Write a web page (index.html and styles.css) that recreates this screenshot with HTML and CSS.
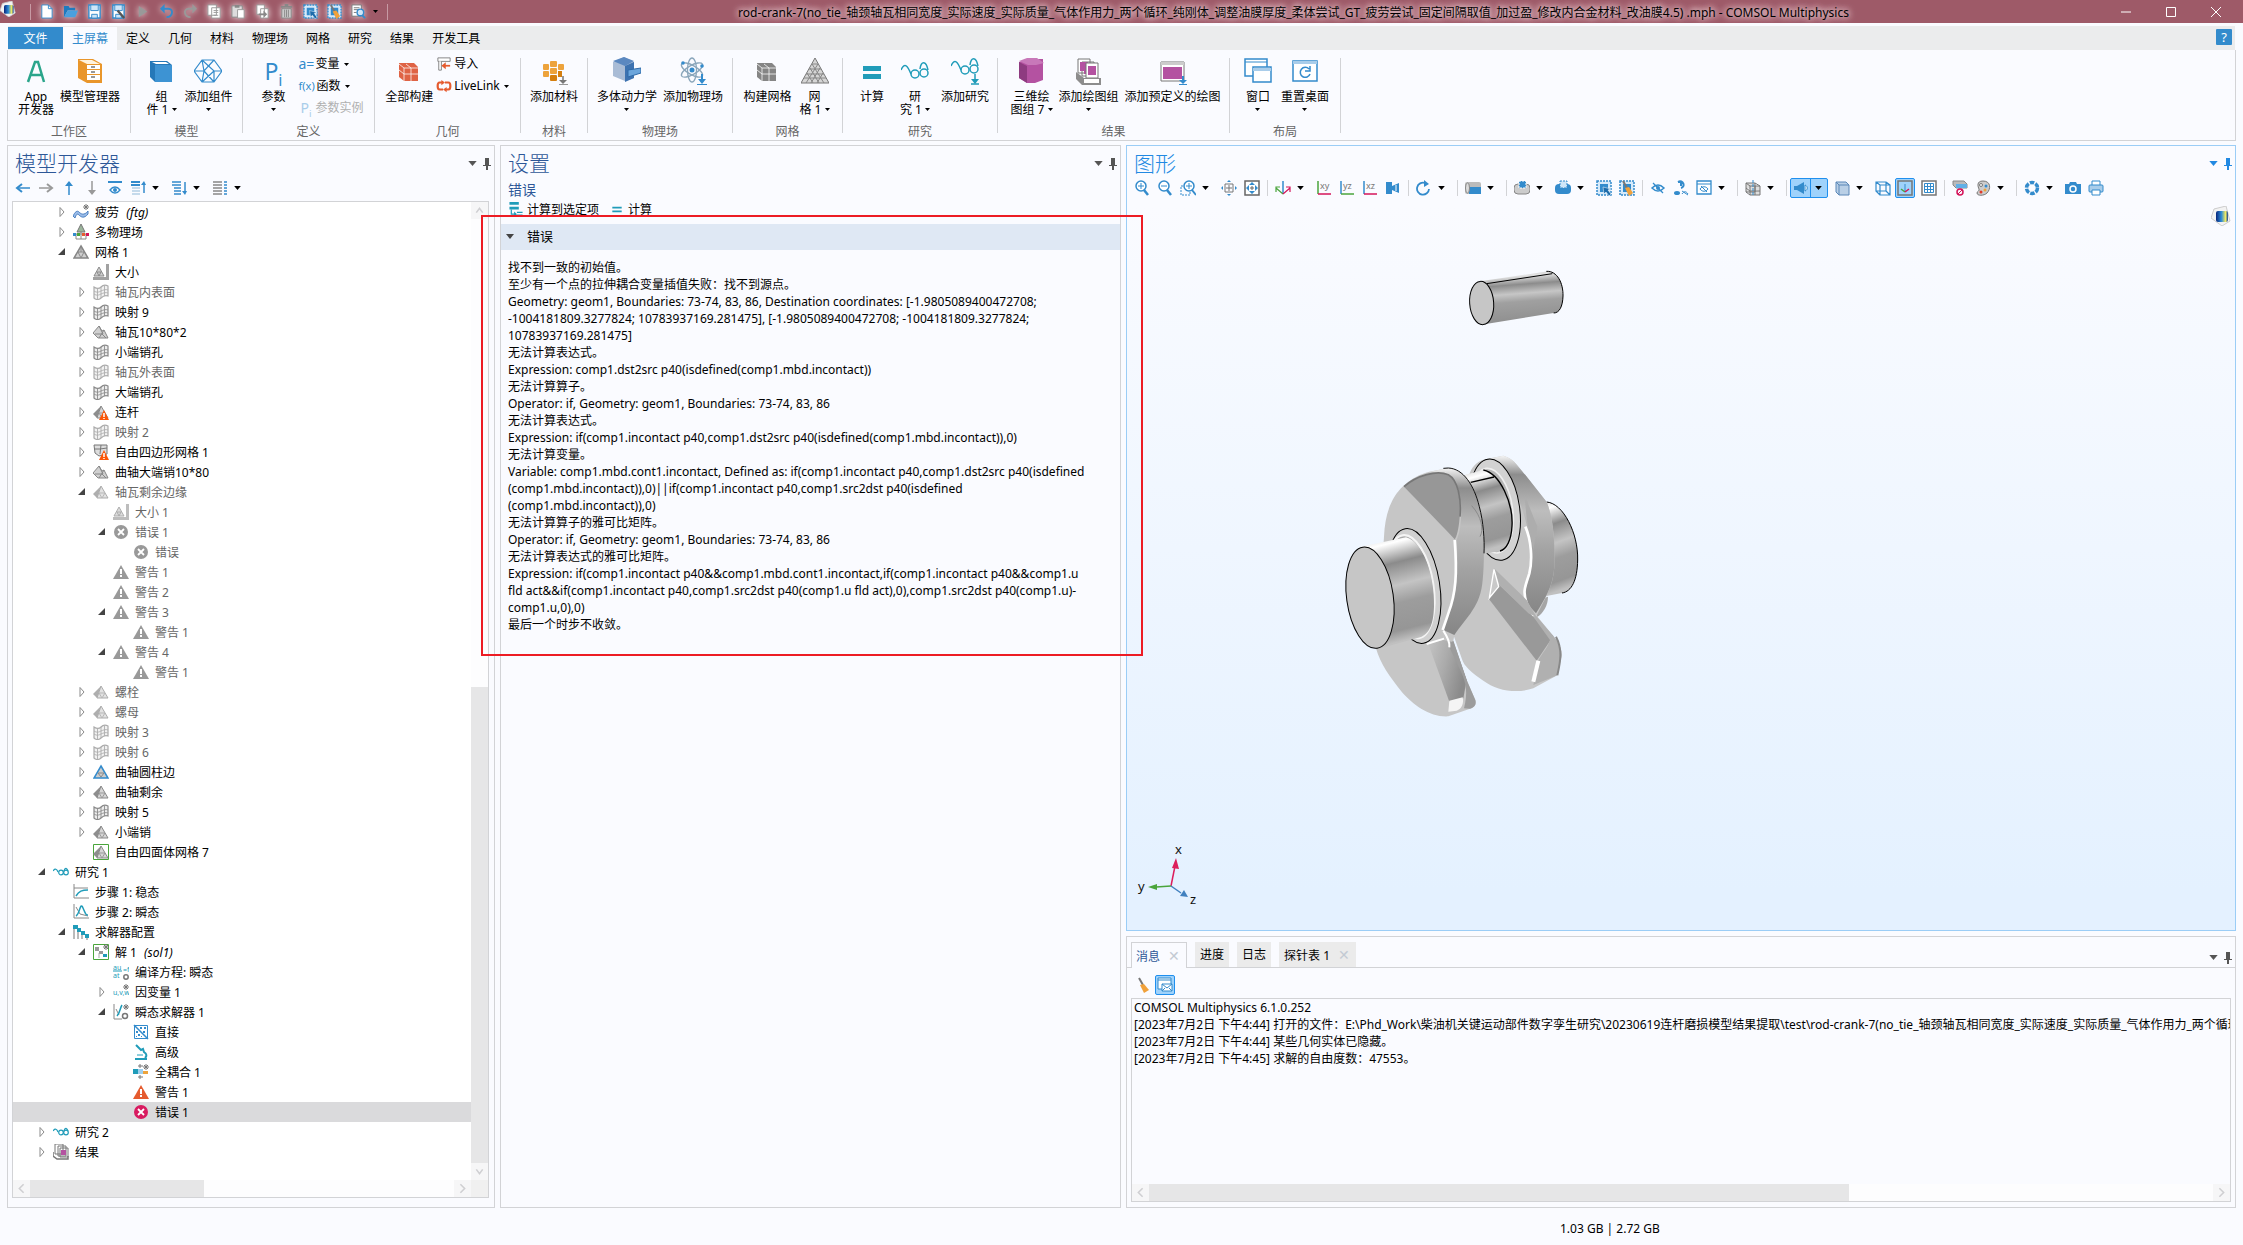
FILE: index.html
```html
<!DOCTYPE html>
<html lang="zh-CN">
<head>
<meta charset="utf-8">
<title>COMSOL Multiphysics</title>
<link rel="stylesheet" href="styles.css">
</head>
<body>
<svg class="paints" aria-hidden="true">
  <defs>
    <linearGradient id="logoG"><stop offset="0" stop-color="#06267c"/><stop offset=".45" stop-color="#2c8ad6"/><stop offset=".8" stop-color="#f3ec62"/><stop offset="1" stop-color="#0a3b9b"/></linearGradient>
    <linearGradient id="cyl" x1="0" y1="0" x2=".12" y2="1"><stop offset="0" stop-color="#b0b0b0"/><stop offset=".14" stop-color="#e4e4e4"/><stop offset=".3" stop-color="#8c8c8c"/><stop offset=".47" stop-color="#c6c6c6"/><stop offset=".62" stop-color="#a0a0a0"/><stop offset="1" stop-color="#8f8f8f"/></linearGradient>
    <linearGradient id="jour" x1="0" y1="0" x2=".17" y2="1"><stop offset="0" stop-color="#d0d0d0"/><stop offset=".12" stop-color="#fff"/><stop offset=".3" stop-color="#8b8b8b"/><stop offset=".5" stop-color="#c4c4c4"/><stop offset=".66" stop-color="#9d9d9d"/><stop offset=".9" stop-color="#969696"/><stop offset="1" stop-color="#c0c0c0"/></linearGradient>
    <linearGradient id="side" x1="0" y1="0" x2="0" y2="1"><stop offset="0" stop-color="#f4f4f4"/><stop offset=".12" stop-color="#8d8d8d"/><stop offset=".35" stop-color="#bdbdbd"/><stop offset=".6" stop-color="#a3a3a3"/><stop offset="1" stop-color="#868686"/></linearGradient>
    <linearGradient id="slope" x1="0" y1="0" x2="1" y2=".4"><stop offset="0" stop-color="#c4c4c4"/><stop offset=".5" stop-color="#ababab"/><stop offset="1" stop-color="#8b8b8b"/></linearGradient>
  </defs>
</svg>
<svg class="sprite" aria-hidden="true">
  <symbol id="logo" viewBox="0 0 20 20"><path d="M3 3 15 0 19 15 11 20 0 12Z" fill="#f3f3f3" stroke="#ccc"/><rect x="5" y="5" width="12" height="11" rx="2" fill="url(#logoG)"/></symbol>
  <symbol id="new" viewBox="0 0 16 16"><path d="M3 1h7l4 4v10H3z" fill="#fff" stroke="#338bcc"/><path d="M10 1v4h4" fill="none" stroke="#338bcc"/></symbol>
  <symbol id="open" viewBox="0 0 16 16"><path d="M1 14V2h5l1 2h6v3H5z" fill="#1f7abf"/><path d="M1 14 5 7h11l-3 7z" fill="#4aa0de"/></symbol>
  <symbol id="save" viewBox="0 0 16 16"><path d="M2 1h12v14H2z" fill="#fff" stroke="#338bcc" stroke-width="1.5"/><path d="M4 1h8v6H4zM5 11h6v4H5z" fill="#cfe6f8" stroke="#338bcc"/></symbol>
  <symbol id="saveas" viewBox="0 0 16 16"><use href="#save"/><path d="m7 7 7 8" stroke="#555" stroke-width="2.5"/></symbol>
  <symbol id="play" viewBox="0 0 16 16"><path d="M4 2 13 8 4 14z" fill="#999"/></symbol>
  <symbol id="undo" viewBox="0 0 16 16"><path d="M3 5h7c6 0 5 9-2 9" fill="none" stroke="#338bcc" stroke-width="2"/><path d="M6 0 1 5l5 5z" fill="#338bcc"/></symbol>
  <symbol id="redo" viewBox="0 0 16 16"><path d="M13 5H6c-6 0-5 9 2 9" fill="none" stroke="#999" stroke-width="2"/><path d="m10 0 5 5-5 5z" fill="#999"/></symbol>
  <symbol id="copy" viewBox="0 0 16 16"><path d="M1 1h9v11H1zM5 4h9v11H5z" fill="#fff" stroke="#999"/><path d="M7 7h5M7 9h5M7 12h5" stroke="#999"/></symbol>
  <symbol id="paste" viewBox="0 0 16 16"><path d="M1 2h11v12H1z" fill="#ddd" stroke="#888"/><path d="M4 1h5v3H4z" fill="#888"/><path d="M7 6h7v9H7z" fill="#fff" stroke="#999"/></symbol>
  <symbol id="dup" viewBox="0 0 16 16"><path d="M2 1h8v10H2zM6 5h8v10H6z" fill="#fff" stroke="#999"/><path d="M4 10h5V7l4 4-4 4v-3H4z" fill="#888"/></symbol>
  <symbol id="trash" viewBox="0 0 16 16"><path d="M2 3h12M6 1h4" stroke="#888" stroke-width="2"/><path d="M3 5h10v10H3z" fill="#ccc" stroke="#888"/><path d="M6 6v8M8 6v8M10 6v8" stroke="#888"/></symbol>
  <symbol id="sel" viewBox="0 0 16 16"><path d="M1 1h14v14H1z" fill="#d6eafa" stroke="#338bcc" stroke-width="1.5" stroke-dasharray="2 1"/><path d="M4 4h8v8H4z" fill="#338bcc"/><path d="m7 7 8 2-3 1 3 4-2 2-3-4-2 2z" fill="#1d6cab" stroke="#fff" stroke-width=".5"/></symbol>
  <symbol id="desel" viewBox="0 0 16 16"><path d="M1 1h14v14H1z" fill="#d6eafa" stroke="#338bcc" stroke-width="1.5" stroke-dasharray="2 1"/><path d="M4 4h8v8H4z" fill="#338bcc"/><path d="m4 1 4 7" stroke="#777" stroke-width="2"/><path d="m6 8 4-1 4 6-4 3z" fill="#f0a13b"/></symbol>
  <symbol id="find" viewBox="0 0 16 16"><path d="M1 1h10v12H1z" fill="#fff" stroke="#777"/><path d="M3 4h6M3 6h6M3 9h3" stroke="#777"/><circle cx="10" cy="9" r="3.5" fill="#cfe6f8" stroke="#338bcc" stroke-width="1.5"/><path d="m12 12 3 3" stroke="#338bcc" stroke-width="2"/></symbol>
  <symbol id="dd" viewBox="0 0 10 6"><path d="M0 0h10L5 6z" fill="currentColor"/></symbol>
  <symbol id="pin" viewBox="0 0 8 12"><path d="M2 0h4v7H2zM0 7h8v1H0zM3 8h2v4H3z" fill="currentColor"/></symbol>

  <symbol id="rApp" viewBox="0 0 28 28"><path d="M6 25 13 5h3l6 20M8 18h12" fill="none" stroke="#2aa58b" stroke-width="2.5"/></symbol>
  <symbol id="rMgr" viewBox="0 0 28 28"><path d="M2 2h15l9 5v19H11L2 21z" fill="#e9962b"/><path d="M3 3h13l8 4H11z" fill="#fff3dd"/><path d="M11 8h13v4H11zM11 13h13v4H11zM11 18h13v5H11z" fill="#fff"/><path d="M15 10h4M15 15h4M15 20h4" stroke="#777" stroke-width="1.5"/></symbol>
  <symbol id="rComp" viewBox="0 0 28 28"><path d="M3 4h17l5 4v17H8l-5-5z" fill="#2578b8"/><path d="M8 8h17v17H8z" fill="#3d93d3"/><path d="m5 5h14l3 2H9z" fill="#fff"/></symbol>
  <symbol id="rAddc" viewBox="0 0 28 28"><path d="M8 3h12l8 11-8 11H8L0 14zM0 14h10L20 3M8 3l2 11M10 14l10 11M10 14 8 25M8 3l12 11h8M20 14V25M20 14 8 25" fill="none" stroke="#338bcc" stroke-width="1.2"/></symbol>
  <symbol id="rBuild" viewBox="0 0 28 28"><path d="M4 6h15l4 4v14H9l-5-4z" fill="currentColor"/><path d="M4 7l5 4h14M9 11v13M4 13l5 4h14M16 11v13M11 7l5 4" fill="none" stroke="#fff" stroke-opacity=".75"/></symbol>
  <symbol id="rImp" viewBox="0 0 16 16"><path d="M1 1h14v4H1z" fill="#fff" stroke="#777"/><path d="M2 5v10h3V5" fill="#fff" stroke="#777"/><path d="M15 10H8" stroke="#e55b2f" stroke-width="2"/><path d="m10 6-5 4 5 4z" fill="#e55b2f"/></symbol>
  <symbol id="rLink" viewBox="0 0 16 16"><path d="M6 4H3c-3 0-3 8 0 8h4M10 12h3c3 0 3-8 0-8H9" fill="none" stroke="#e55b2f" stroke-width="2.5"/><path d="M5 1l4 3-4 3zM11 9l-4 3 4 3z" fill="#e55b2f"/></symbol>
  <symbol id="rMat" viewBox="0 0 28 28"><g fill="#eda33c"><rect x="10" y="4" width="7" height="6" rx="1"/><rect x="3" y="7" width="6" height="6" rx="1"/><rect x="18" y="7" width="6" height="6" rx="1"/><rect x="10" y="11" width="7" height="6" rx="1"/><rect x="3" y="14" width="6" height="6" rx="1"/></g><rect x="10" y="18" width="7" height="6" rx="1" fill="#d57f0f"/><rect x="18" y="14" width="4" height="6" fill="#d57f0f"/><path d="M23 19v6M19 28h9" stroke="#777" stroke-width="1.5"/><path d="M19 23h8l-4 4z" fill="#777"/></symbol>
  <symbol id="rMbd" viewBox="0 0 28 28"><path d="M0 5 11 0l10 5v16l-9 3-12-5z" fill="#a9bcd6"/><path d="M0 4 11 0l10 4-9 5z" fill="#5b88c0"/><path d="M12 9l9-4v16l-9 4z" fill="#3d72b0"/><path d="M15 13l13-2v5l-13 4z" fill="#6ba5dc" stroke="#2f6aa8"/></symbol>
  <symbol id="atom" viewBox="0 0 28 28"><g fill="none" stroke="#8aa6bb" stroke-width="1.3"><ellipse cx="13" cy="13" rx="4.5" ry="12"/><ellipse cx="13" cy="13" rx="4.5" ry="12" transform="rotate(60 13 13)"/><ellipse cx="13" cy="13" rx="4.5" ry="12" transform="rotate(-60 13 13)"/></g><circle cx="13" cy="13" r="2.5" fill="#338bcc"/><circle cx="4" cy="6" r="1.8" fill="#338bcc"/><circle cx="23" cy="9" r="1.8" fill="#338bcc"/></symbol>
  <symbol id="rPhys" viewBox="0 0 28 28"><use href="#atom"/><path d="M23 17v7M18 28h10" stroke="#338bcc" stroke-width="2"/><path d="M19 22h8l-4 5z" fill="#338bcc"/></symbol>
  <symbol id="rTri" viewBox="0 0 28 28"><path d="M14 1 28 26H0z" fill="#d5d5d5" stroke="#777"/><path d="M11 7h6M8 12h12M5 17h18M3 21h22M6 16l6 10M9 11l9 15M11 7l12 19M22 16l-6 10M19 11l-9 15M17 7 5 26" stroke="#888" fill="none"/></symbol>
  <symbol id="rEq" viewBox="0 0 28 28"><path d="M5 9h18v5H5zM5 17h18v5H5z" fill="#209cb9"/></symbol>
  <symbol id="rGl" viewBox="0 0 28 28"><g fill="none" stroke="#209cb9" stroke-width="1.5"><path d="M0 13C4 4 7 10 10 17M19 12c1-8 6-9 8 1"/><circle cx="14" cy="17" r="4"/><circle cx="23" cy="16" r="4"/></g></symbol>
  <symbol id="rAddS" viewBox="0 0 28 28"><g fill="none" stroke="#209cb9" stroke-width="1.5"><path d="M0 9C4 0 7 6 10 13M19 8c1-8 6-9 8 1"/><circle cx="14" cy="13" r="4"/><circle cx="23" cy="12" r="4"/><path d="M24 17v7M20 27h8"/></g><path d="M20 22h8l-4 5z" fill="#209cb9"/></symbol>
  <symbol id="rPlot" viewBox="0 0 28 28"><path d="M2 5 10 2h16v21l-8 3h-8L2 21z" fill="#b452a1"/><path d="M2 4 10 1h10l7 5-8 2h-8z" fill="#c878b9"/><path d="M10 9 2 5v16l8 5z" fill="#8e3b80"/></symbol>
  <symbol id="rGrp" viewBox="0 0 28 28"><path d="M3 2h12v14H3zM7 5h12v14H7z" fill="#fff" stroke="#777"/><path d="M5 5h8v9H5zM9 8h8v9H9z" fill="#b452a1"/><path d="M11 6h12v15H11z" fill="#fff" stroke="#777"/><path d="M13 9h8v9h-8z" fill="#b452a1"/><path d="M1 15v7l6 6h19v-7H9z" fill="#8d8d8d"/><path d="M9 22h15v4H9z" fill="#fff"/></symbol>
  <symbol id="rPre" viewBox="0 0 28 28"><path d="M2 5h23v19H2z" fill="#fff" stroke="#777"/><path d="M2 5h23v3H2z" fill="#ccc"/><path d="M4 10h19v12H4z" fill="#b452a1"/><path d="M24 19v7M20 28h8" stroke="#338bcc" stroke-width="2"/><path d="M20 23h8l-4 4z" fill="#338bcc"/></symbol>
  <symbol id="rWin" viewBox="0 0 28 28"><path d="M1 2h22v17H1z" fill="#fff" stroke="#338bcc" stroke-width="1.5"/><path d="M1 5h22" stroke="#338bcc"/><path d="M9 10h18v15H9z" fill="#fff" stroke="#338bcc" stroke-width="1.5"/><path d="M9 11h18v3H9z" fill="#a9cdea"/></symbol>
  <symbol id="rRes" viewBox="0 0 28 28"><path d="M2 4h24v20H2z" fill="#fff" stroke="#338bcc" stroke-width="1.5"/><path d="M2 4h24v3H2z" fill="#a9cdea"/><path d="M18 12a5 5 0 1 0 1 5M19 9v5h-5" fill="none" stroke="#338bcc" stroke-width="1.5"/></symbol>

  <symbol id="aL" viewBox="0 0 16 16"><path d="M3 8h12" stroke="currentColor" stroke-width="1.5"/><path d="M7 4 2 8l5 4" fill="none" stroke="currentColor" stroke-width="2"/></symbol>
  <symbol id="aR" viewBox="0 0 16 16"><path d="M1 8h12" stroke="currentColor" stroke-width="1.5"/><path d="m9 4 5 4-5 4" fill="none" stroke="currentColor" stroke-width="2"/></symbol>
  <symbol id="aU" viewBox="0 0 16 16"><path d="M8 2v13" stroke="currentColor" stroke-width="1.5"/><path d="M4 6 8 1l4 5z" fill="currentColor"/></symbol>
  <symbol id="aD" viewBox="0 0 16 16"><path d="M8 1v13" stroke="currentColor" stroke-width="1.5"/><path d="m4 10 4 5 4-5z" fill="currentColor"/></symbol>
  <symbol id="show" viewBox="0 0 16 16"><path d="M1 2h14M3 2h10" stroke="#338bcc" stroke-width="2"/><path d="M3 10c3-4 7-4 10 0-3 4-7 4-10 0z" fill="#fff" stroke="#338bcc" stroke-width="1.3"/><circle cx="8" cy="10" r="2" fill="#338bcc"/></symbol>
  <symbol id="colp" viewBox="0 0 16 16"><path d="M1 2h9M1 5h9" stroke="#338bcc" stroke-width="2"/><path d="M2 8h8M2 11h8M2 14h8" stroke="#8fb9d8"/><path d="M14 3v10" stroke="#338bcc" stroke-width="1.5"/><path d="m11 5 3-4 2 4z" fill="#338bcc"/></symbol>
  <symbol id="expd" viewBox="0 0 16 16"><path d="M1 2h9M1 5h9M3 8h7M3 11h7M3 14h7" stroke="#338bcc" stroke-width="1.5"/><path d="M14 2v10" stroke="#338bcc" stroke-width="1.5"/><path d="m11 11 3 4 2-4z" fill="#338bcc"/></symbol>
  <symbol id="cols" viewBox="0 0 16 16"><path d="M1 2h9M1 5h9M1 8h9M1 11h9M1 14h9" stroke="#888" stroke-width="1.5"/><path d="M12 2h3M12 5h3M12 8h3M12 11h3M12 14h3" stroke="#338bcc" stroke-width="1.5"/></symbol>

  <symbol id="tc" viewBox="0 0 10 12"><path d="M3 1.5 7 6 3 10.500z" fill="#fff" stroke="#8b8b8b"/></symbol>
  <symbol id="to" viewBox="0 0 10 12"><path d="M8 2v7H1z" fill="#444"/></symbol>
  <symbol id="gear" viewBox="0 0 16 16"><path d="M13 0v6M10 3h6M11 1l4 4M15 1l-4 4" stroke="#777"/></symbol>
  <symbol id="ftg" viewBox="0 0 16 16"><path d="M0 12c2-4 4-6 6-4s5 4 9-1v3c-4 5-7 3-9 1s-3 0-4 3z" fill="#9bbce8" stroke="#4b80c2"/><use href="#gear"/></symbol>
  <symbol id="mph" viewBox="0 0 16 16"><path d="M8 0 4 8h8z" fill="#9bb59b" stroke="#777"/><path d="M3 10h10v5H3zM8 8v7" fill="none" stroke="#888"/><path d="M0 9h3v3H0z" fill="#338bcc"/><path d="M4 9h3v3H4z" fill="#4aa53c"/><path d="M9 9h3v3H9z" fill="#e55b2f"/><path d="M13 9h3v3h-3z" fill="#d4145a"/></symbol>
  <symbol id="mesh" viewBox="0 0 16 16"><path d="M8 2 15 14H1z" fill="#cfcfcf" stroke="#858585" stroke-width="1.5"/><path d="M5 8h6l-3 6zM8 3v5" fill="none" stroke="#8a8a8a"/></symbol>
  <symbol id="size" viewBox="0 0 16 16"><path d="M6 3 11 12H1z" fill="#cfcfcf" stroke="#8a8a8a"/><path d="M4 8h4l-2 4z" fill="none" stroke="#8a8a8a"/><path d="M13 0h3v16h-3zM0 13h16v3H0z" fill="#a2a2a2"/></symbol>
  <symbol id="map" viewBox="0 0 16 16"><path d="M1 3c3 2 5 2 7 0s5-2 7-1v10c-3-1-5 0-7 2s-5 2-7 0z" fill="#ececec" stroke="#888" stroke-width="1.2"/><path d="M1 7c3 2 5 1 7 0s5-2 7-1M1 10c3 2 5 1 7 0s5-2 7-1M4.500 4v11M8 3v11M11.500 2v10" fill="none" stroke="#8c8c8c" stroke-width=".9"/></symbol>
  <symbol id="edge" viewBox="0 0 16 16"><path d="M6 2 0 9l5 5h10L11 6 9 7z" fill="#d0d0d0" stroke="#888"/><path d="M6 2l4 8H2M11 6 6 14M9 10l4 4" fill="none" stroke="#888"/></symbol>
  <symbol id="tet" viewBox="0 0 16 16"><path d="M8 2 0 10l4 4z" fill="#8d8d8d"/><path d="M8 2l7 12H4z" fill="#d6d6d6" stroke="#888"/><path d="M6 9h6l-3 5z" fill="none" stroke="#999"/></symbol>
  <symbol id="warnS" viewBox="0 0 16 16"><path d="M11 6l5 10H6z" fill="#fb5607"/><path d="M11 9v4M11 14v1" stroke="#fff" stroke-width="1.5"/></symbol>
  <symbol id="tetW" viewBox="0 0 16 16"><use href="#tet"/><use href="#warnS"/></symbol>
  <symbol id="quadW" viewBox="0 0 16 16"><path d="M1 1h13v9l-8 2-4-3z" fill="#ddd" stroke="#777"/><path d="M1 5h6l7-1M8 1l-1 9" fill="none" stroke="#777"/><use href="#warnS"/></symbol>
  <symbol id="triB" viewBox="0 0 16 16"><path d="M8 2 15 14H1z" fill="#ccc" stroke="#338bcc" stroke-width="1.5"/><path d="M5 9h6l-3 4z" fill="none" stroke="#888"/></symbol>
  <symbol id="tetG" viewBox="0 0 16 16"><path d="M.5.5h15v15H.5z" fill="#fff" stroke="#4aa53c"/><use href="#tet"/></symbol>
  <symbol id="err" viewBox="0 0 16 16"><circle cx="8" cy="8" r="7" fill="currentColor"/><path d="m5 5 6 6M11 5l-6 6" stroke="#fff" stroke-width="1.8"/></symbol>
  <symbol id="warn" viewBox="0 0 16 16"><path d="M8 1l8 14H0z" fill="currentColor"/><path d="M8 5v5M8 11v2" stroke="#fff" stroke-width="2"/></symbol>
  <symbol id="gl" viewBox="0 0 16 16"><g fill="none" stroke="#209cb9" stroke-width="1.2"><path d="M0 7c2-3 4-2 5 1M11 7c1-4 3-3 4 0"/><circle cx="8" cy="8.5" r="2.300"/><circle cx="13" cy="8.5" r="2.300"/></g></symbol>
  <symbol id="st1" viewBox="0 0 16 16"><path d="M1 0v14h15M1 4h14" fill="none" stroke="#888"/><path d="M3 12c3-5 6-6 12-6" fill="none" stroke="#209cb9" stroke-width="1.5"/></symbol>
  <symbol id="st2" viewBox="0 0 16 16"><path d="M1 0v14h15M3 3l4 7 8 2" fill="none" stroke="#888"/><path d="M3 12C7 10 7-3 10 4s3 7 5 7" fill="none" stroke="#209cb9" stroke-width="1.5"/></symbol>
  <symbol id="solc" viewBox="0 0 16 16"><path d="M1 3v12M5 5v10M9 9v6M14 12v4" stroke="#777"/><path d="M0 1h5v4H0zM4 4h4v4H4zM8 7h4v4H8zM12 10h4v4h-4z" fill="#209cb9"/></symbol>
  <symbol id="sol" viewBox="0 0 16 16"><path d="M.5.5h15v15H.5z" fill="#fff" stroke="#4aa53c"/><path d="M2 3h4v4H2zM6 7h4v3H6z" fill="#999"/><path d="M10 10h4v3h-4z" fill="#209cb9"/><path d="M6 9v5" stroke="#aaa"/><use href="#gear"/></symbol>
  <symbol id="ceq" viewBox="0 0 16 16"><text x="0" y="6" class="tiny">au</text><text x="0" y="14" class="tiny">at</text><text x="10" y="8" class="tiny">=f</text><path d="M0 7h9" stroke="#209cb9"/><circle cx="13" cy="13" r="2.2" fill="none" stroke="#777" stroke-width="1.5"/></symbol>
  <symbol id="uvw" viewBox="0 0 16 16"><text x="0" y="11" class="tiny">u,v,w</text><use href="#gear"/></symbol>
  <symbol id="tsol" viewBox="0 0 16 16"><path d="M1 0v15h8M3 5l3 6" fill="none" stroke="#888"/><path d="M4 12c3-3 3-8 5-11" fill="none" stroke="#209cb9" stroke-width="1.5"/><use href="#gear"/><circle cx="12" cy="12" r="2.5" fill="none" stroke="#777" stroke-width="1.5"/></symbol>
  <symbol id="dir" viewBox="0 0 16 16"><path d="M1.5 1.5h13v13h-13z" fill="#fff" stroke="#338bcc"/><path d="m1 1 14 14" stroke="#338bcc" stroke-width="1.5"/><path d="M7 3h2v2H7zM11 3h2v2h-2zM10 7h2v2h-2zM3 7h2v2H3zM5 10h2v2H5zM3 12h1v1H3zM8 12h1v1H8z" fill="#338bcc"/></symbol>
  <symbol id="adv" viewBox="0 0 16 16"><path d="M3 1l5 5 2-1 1 3c3 2 3 4 1 6" fill="none" stroke="#209cb9" stroke-width="2"/><path d="M2 15h12" stroke="#209cb9" stroke-width="2"/><path d="M4 11h6" stroke="#209cb9"/></symbol>
  <symbol id="fc" viewBox="0 0 16 16"><path d="M0 5h5v5H0z" fill="#209cb9"/><path d="M5 5h5v5H5z" fill="#9fd0ef"/><path d="M10 7h5v3h-5z" fill="#eda33c"/><path d="M7 0v4M5 2h5M7 11v4M5 13h5" stroke="#777"/><use href="#gear"/></symbol>
  <symbol id="res" viewBox="0 0 16 16"><path d="M2 0h8v10H2zM5 2h8v10H5zM7 4h8v9H7z" fill="#fff" stroke="#777"/><path d="M8 6h5v5H8z" fill="#b452a1"/><path d="M0 8v4l4 3h11v-3" fill="none" stroke="#777" stroke-width="1.5"/></symbol>

  <symbol id="zin" viewBox="0 0 16 16"><circle cx="7" cy="6" r="5" fill="#fff" stroke="#338bcc" stroke-width="1.5"/><path d="M4 6h6M7 3v6" stroke="#338bcc"/><path d="m10 10 4 5" stroke="#338bcc" stroke-width="2.5"/></symbol>
  <symbol id="zout" viewBox="0 0 16 16"><circle cx="7" cy="6" r="5" fill="#fff" stroke="#338bcc" stroke-width="1.5"/><path d="M4 6h6" stroke="#338bcc"/><path d="m10 10 4 5" stroke="#338bcc" stroke-width="2.5"/></symbol>
  <symbol id="zbox" viewBox="0 0 16 16"><path d="M1 6h9v9H1z" fill="none" stroke="#338bcc" stroke-dasharray="2 1"/><circle cx="9" cy="6" r="5" fill="#fff" stroke="#338bcc" stroke-width="1.5"/><path d="M6 6h6M9 3v6" stroke="#338bcc"/><path d="m12 10 4 5" stroke="#338bcc" stroke-width="2"/></symbol>
  <symbol id="cen" viewBox="0 0 16 16"><path d="M4 4h8v8H4zM8 5v6M5 8h6" fill="none" stroke="#777"/><path d="m8 0 2 2H6zM8 16l2-2H6zM0 8l2-2v4zM16 8l-2-2v4z" fill="#338bcc"/></symbol>
  <symbol id="ext" viewBox="0 0 16 16"><path d="M1 1h14v14H1z" fill="#fff" stroke="#666" stroke-width="1.5"/><path d="m8 2 3 3H5zM8 14l3-3H5zM2 8l3-3v6zM14 8l-3-3v6z" fill="#338bcc"/><path d="M8 6v4M6 8h4" stroke="#666"/></symbol>
  <symbol id="axs" viewBox="0 0 16 16"><path d="M8 1v13" stroke="#338bcc" stroke-width="1.5"/><path d="m8 14-7-6M1 12V7h4" fill="none" stroke="#4aa53c" stroke-width="1.2"/><path d="m8 14 7-6M15 12V7h-4" fill="none" stroke="#d4145a" stroke-width="1.2"/></symbol>
  <symbol id="vxy" viewBox="0 0 16 16"><path d="M2 1v13" stroke="#4aa53c" stroke-width="1.5"/><path d="M2 14h13" stroke="#d4145a" stroke-width="1.5"/><text x="4" y="9" class="ax">xy</text></symbol>
  <symbol id="vyz" viewBox="0 0 16 16"><path d="M2 1v13" stroke="#338bcc" stroke-width="1.5"/><path d="M2 14h13" stroke="#4aa53c" stroke-width="1.5"/><text x="4" y="9" class="ax">yz</text></symbol>
  <symbol id="vxz" viewBox="0 0 16 16"><path d="M2 1v13" stroke="#338bcc" stroke-width="1.5"/><path d="M2 14h13" stroke="#d4145a" stroke-width="1.5"/><text x="4" y="9" class="ax">xz</text></symbol>
  <symbol id="persp" viewBox="0 0 16 16"><path d="M1 2h6v12H1zM7 6l7-3v10l-7-3z" fill="#338bcc"/><path d="M11 5v6" stroke="#fff"/></symbol>
  <symbol id="rot" viewBox="0 0 16 16"><path d="M9 3a6 6 0 1 0 4 6" fill="none" stroke="#338bcc" stroke-width="1.8"/><path d="M8 0v7l5-3z" fill="#338bcc"/></symbol>
  <symbol id="clip" viewBox="0 0 16 16"><rect y="2" width="16" height="12" rx="2" fill="#bbb"/><path d="M4 7h12v7H4z" fill="#338bcc"/><ellipse cx="2.5" cy="8" rx="2" ry="5" fill="#ddd" stroke="#888"/></symbol>
  <symbol id="selb" viewBox="0 0 16 16"><rect y="4" width="16" height="10" rx="4" fill="#ccc" stroke="#888"/><path d="M5 1h7v7H5z" fill="#338bcc" stroke="#fff" stroke-dasharray="2 1"/></symbol>
  <symbol id="selc" viewBox="0 0 16 16"><rect y="4" width="16" height="10" rx="4" fill="#338bcc"/><path d="M5 1h7v7H5z" fill="#cfe6f8" stroke="#338bcc" stroke-dasharray="2 1"/></symbol>
  <symbol id="hide" viewBox="0 0 16 16"><path d="M2 8c4-4 8-4 12 0-4 4-8 4-12 0z" fill="none" stroke="#338bcc" stroke-width="1.5"/><circle cx="8" cy="8" r="2" fill="#338bcc"/><path d="m3 3 10 10" stroke="#338bcc" stroke-width="1.3"/></symbol>
  <symbol id="unh" viewBox="0 0 16 16"><path d="M5 2c5-3 8 5 3 6M5 2h3v4" fill="none" stroke="#338bcc" stroke-width="2"/><ellipse cx="4" cy="13" rx="3" ry="2" fill="#338bcc"/><path d="M9 11l6 4M9 14c2-3 4-3 6 0" stroke="#338bcc" fill="none"/></symbol>
  <symbol id="hwin" viewBox="0 0 16 16"><path d="M1 1h14v13H1z" fill="#fff" stroke="#338bcc" stroke-width="1.3"/><path d="M1 4h14" stroke="#338bcc"/><path d="M4 9c2-3 6-3 8 0-2 3-6 3-8 0zM5 6l6 6" fill="none" stroke="#338bcc"/></symbol>
  <symbol id="grid3" viewBox="0 0 16 16"><path d="M1 3h9v9H1zM5 6h10v9H5zM1 3l4 3M10 3l5 3M1 12l4 3M1 8l4 3h10M10 6v9" fill="#ddd" stroke="#777"/><path d="M8 0v16" stroke="#338bcc" stroke-dasharray="3 1"/></symbol>
  <symbol id="lite" viewBox="0 0 16 16"><path d="M1 6h3l7-4v12L4 10H1z" fill="#338bcc"/><path d="M12 5c3 1 3 5 0 6z" fill="#fff" stroke="#338bcc"/></symbol>
  <symbol id="transp" viewBox="0 0 16 16"><path d="M2 2h10l3 3v10H5l-3-3z" fill="#b9cfe6" stroke="#5a87b8"/><path d="M2 2l3 3h10M5 5v10" fill="none" stroke="#5a87b8"/></symbol>
  <symbol id="wire" viewBox="0 0 16 16"><path d="M1 2h10v9H1zM5 5h10v10H5zM1 2l4 3M11 2l4 3M1 11l4 4M11 11l4 4" fill="none" stroke="#338bcc" stroke-width="1.2"/></symbol>
  <symbol id="orient" viewBox="0 0 16 16"><path d="M1 1h14v14H1z" fill="none" stroke="#777" stroke-width="1.5"/><path d="M8 4v8" stroke="#338bcc"/><path d="m8 12-4-3" stroke="#4aa53c" stroke-width="1.5"/><path d="m8 12 4-3" stroke="#d4145a" stroke-width="1.5"/></symbol>
  <symbol id="grid" viewBox="0 0 16 16"><path d="M1 1h14v14H1z" fill="#fff" stroke="#777" stroke-width="1.5"/><path d="M3.5 3.5h9v9h-9zM6.5 3.5v9M9.5 3.5v9M3.5 6.5h9M3.5 9.5h9" fill="none" stroke="#338bcc"/></symbol>
  <symbol id="nolab" viewBox="0 0 16 16"><path d="M1 1h11l3 3v4H4L1 5z" fill="#bbb" stroke="#888"/><path d="M4 4h11v4H4z" fill="#62b0e6"/><circle cx="8" cy="12" r="3" fill="none" stroke="#d4145a" stroke-width="1.5"/><path d="m6 14 4-4" stroke="#d4145a"/></symbol>
  <symbol id="pal" viewBox="0 0 16 16"><path d="M8 1c8 0 8 8 4 12-3 3-10 3-10 0 0-2 3-2 2-4S1 1 8 1z" fill="#ccc" stroke="#777"/><circle cx="6" cy="5" r="1.5" fill="#fff" stroke="#777"/><circle cx="11" cy="6" r="1.5" fill="#338bcc"/><circle cx="10" cy="10" r="1.5" fill="#eda33c"/><circle cx="6" cy="12" r="1.5" fill="#e03a2a"/></symbol>
  <symbol id="snapi" viewBox="0 0 16 16"><circle cx="8" cy="8" r="5.5" fill="none" stroke="#338bcc" stroke-width="3.5" stroke-dasharray="4.5 1.26"/></symbol>
  <symbol id="cam" viewBox="0 0 16 16"><path d="M0 4h4l1-2h6l1 2h4v10H0z" fill="#338bcc"/><circle cx="8" cy="9" r="3" fill="none" stroke="#fff" stroke-width="1.5"/></symbol>
  <symbol id="print" viewBox="0 0 16 16"><path d="M4 1h8v5H4z" fill="#fff" stroke="#338bcc"/><rect x="1" y="5" width="14" height="7" rx="1" fill="#a9cdea" stroke="#338bcc"/><path d="M4 10h8v5H4z" fill="#fff" stroke="#338bcc"/></symbol>
  <symbol id="broom" viewBox="0 0 16 16"><path d="m4 1 4 7" stroke="#777" stroke-width="2"/><path d="m5 8 4-1 5 6-5 3z" fill="#f0a13b"/></symbol>
  <symbol id="msgw" viewBox="0 0 16 16"><path d="M1 1h13v11H1z" fill="#fff" stroke="#338bcc"/><path d="M1 3h13" stroke="#338bcc"/><path d="M5 7h10v7H5z" fill="#fff" stroke="#338bcc"/><path d="m5 7 5 4 5-4M5 14l3-3M15 14l-3-3" fill="none" stroke="#338bcc"/></symbol>
  <symbol id="ctos" viewBox="0 0 16 16"><path d="M1 0h10v3H1zM1 5h10v3H1z" fill="#209cb9"/><path d="M3 8v5h4M9 11h6M9 14h6" fill="none" stroke="#209cb9" stroke-width="1.3"/><path d="M6 10v6l3-3z" fill="#209cb9"/></symbol>
  <symbol id="eq" viewBox="0 0 16 16"><path d="M3 5h10v2H3zM3 9h10v2H3z" fill="#209cb9"/></symbol>
  <symbol id="chL" viewBox="0 0 16 16"><path d="m10 4-4 4 4 4" fill="none" stroke="#cfcfd2" stroke-width="1.5"/></symbol>
  <symbol id="chR" viewBox="0 0 16 16"><path d="m6 4 4 4-4 4" fill="none" stroke="#cfcfd2" stroke-width="1.5"/></symbol>
  <symbol id="chU" viewBox="0 0 16 16"><path d="m5 10 3-4 3 4" fill="none" stroke="#cfcfd2" stroke-width="1.5"/></symbol>
  <symbol id="chD" viewBox="0 0 16 16"><path d="m5 6 3 4 3-4" fill="none" stroke="#cfcfd2" stroke-width="1.5"/></symbol>
</svg>

<header class="titlebar">
  <svg class="logo"><use href="#logo"/></svg>
  <div class="qat">
    <button aria-label="新建"><svg><use href="#new"/></svg></button>
    <button aria-label="打开"><svg><use href="#open"/></svg></button>
    <button aria-label="保存"><svg><use href="#save"/></svg></button>
    <button aria-label="另存为"><svg><use href="#saveas"/></svg></button>
    <button aria-label="运行"><svg><use href="#play"/></svg></button>
    <button aria-label="撤消"><svg><use href="#undo"/></svg></button>
    <button aria-label="重做"><svg><use href="#redo"/></svg></button>
    <button aria-label="复制"><svg><use href="#copy"/></svg></button>
    <button aria-label="粘贴"><svg><use href="#paste"/></svg></button>
    <button aria-label="创建副本"><svg><use href="#dup"/></svg></button>
    <button aria-label="删除"><svg><use href="#trash"/></svg></button>
    <button aria-label="选择"><svg><use href="#sel"/></svg></button>
    <button aria-label="清除选择"><svg><use href="#desel"/></svg></button>
    <button aria-label="查找"><svg><use href="#find"/></svg></button>
    <button class="more" aria-label="更多"><svg class="dd"><use href="#dd"/></svg></button>
  </div>
  <h1>rod-crank-7(no_tie_轴颈轴瓦相同宽度_实际速度_实际质量_气体作用力_两个循环_纯刚体_调整油膜厚度_柔体尝试_GT_疲劳尝试_固定间隔取值_加过盈_修改内合金材料_改油膜4.5) .mph - COMSOL Multiphysics</h1>
  <div class="winbtns">
    <button aria-label="最小化"><svg viewBox="0 0 10 10"><path d="M0 5h10"/></svg></button>
    <button aria-label="最大化"><svg viewBox="0 0 10 10"><path d="M.5.5h9v9h-9z"/></svg></button>
    <button aria-label="关闭"><svg viewBox="0 0 10 10"><path d="m0 0 10 10M10 0 0 10"/></svg></button>
  </div>
</header>

<nav class="tabs">
  <button class="file">文件</button>
  <button class="on">主屏幕</button>
  <button>定义</button><button>几何</button><button>材料</button><button>物理场</button><button>网格</button><button>研究</button><button>结果</button><button>开发工具</button>
  <button class="help" aria-label="帮助">?</button>
</nav>

<section class="ribbon">
  <div class="grp g1"><div class="items">
    <button class="rb"><svg><use href="#rApp"/></svg><span>App<br>开发器</span></button>
    <button class="rb"><svg><use href="#rMgr"/></svg><span>模型管理器</span></button>
  </div><h2>工作区</h2></div>
  <div class="grp g2"><div class="items">
    <button class="rb"><svg><use href="#rComp"/></svg><span>组<br>件 1 <svg class="dd"><use href="#dd"/></svg></span></button>
    <button class="rb"><svg><use href="#rAddc"/></svg><span>添加组件<br><svg class="dd"><use href="#dd"/></svg></span></button>
  </div><h2>模型</h2></div>
  <div class="grp g3"><div class="items">
    <button class="rb"><b class="pi">P<sub>i</sub></b><span>参数<br><svg class="dd"><use href="#dd"/></svg></span></button>
    <div class="col">
      <button class="sb"><b>a=</b>变量 <svg class="dd"><use href="#dd"/></svg></button>
      <button class="sb"><b class="fx">f(x)</b>函数 <svg class="dd"><use href="#dd"/></svg></button>
      <button class="sb" disabled><b>P<sub>i</sub></b>参数实例</button>
    </div>
  </div><h2>定义</h2></div>
  <div class="grp g4"><div class="items">
    <button class="rb geo"><svg><use href="#rBuild"/></svg><span>全部构建</span></button>
    <div class="col">
      <button class="sb"><svg><use href="#rImp"/></svg>导入</button>
      <button class="sb"><svg><use href="#rLink"/></svg>LiveLink <svg class="dd"><use href="#dd"/></svg></button>
    </div>
  </div><h2>几何</h2></div>
  <div class="grp g5"><div class="items">
    <button class="rb"><svg><use href="#rMat"/></svg><span>添加材料</span></button>
  </div><h2>材料</h2></div>
  <div class="grp g6"><div class="items">
    <button class="rb"><svg><use href="#rMbd"/></svg><span>多体动力学<br><svg class="dd"><use href="#dd"/></svg></span></button>
    <button class="rb"><svg><use href="#rPhys"/></svg><span>添加物理场</span></button>
  </div><h2>物理场</h2></div>
  <div class="grp g7"><div class="items">
    <button class="rb msh"><svg><use href="#rBuild"/></svg><span>构建网格</span></button>
    <button class="rb"><svg><use href="#rTri"/></svg><span>网<br>格 1 <svg class="dd"><use href="#dd"/></svg></span></button>
  </div><h2>网格</h2></div>
  <div class="grp g8"><div class="items">
    <button class="rb"><svg><use href="#rEq"/></svg><span>计算</span></button>
    <button class="rb"><svg><use href="#rGl"/></svg><span>研<br>究 1 <svg class="dd"><use href="#dd"/></svg></span></button>
    <button class="rb"><svg><use href="#rAddS"/></svg><span>添加研究</span></button>
  </div><h2>研究</h2></div>
  <div class="grp g9"><div class="items">
    <button class="rb"><svg><use href="#rPlot"/></svg><span>三维绘<br>图组 7 <svg class="dd"><use href="#dd"/></svg></span></button>
    <button class="rb"><svg><use href="#rGrp"/></svg><span>添加绘图组<br><svg class="dd"><use href="#dd"/></svg></span></button>
    <button class="rb"><svg><use href="#rPre"/></svg><span>添加预定义的绘图</span></button>
  </div><h2>结果</h2></div>
  <div class="grp g10"><div class="items">
    <button class="rb"><svg><use href="#rWin"/></svg><span>窗口<br><svg class="dd"><use href="#dd"/></svg></span></button>
    <button class="rb"><svg><use href="#rRes"/></svg><span>重置桌面<br><svg class="dd"><use href="#dd"/></svg></span></button>
  </div><h2>布局</h2></div>
</section>

<main>
  <section class="panel builder">
    <header class="ph"><h2>模型开发器</h2><svg class="dd"><use href="#dd"/></svg><svg class="pin"><use href="#pin"/></svg></header>
    <div class="tools">
      <button aria-label="后退"><svg><use href="#aL"/></svg></button>
      <button aria-label="前进" class="gry"><svg><use href="#aR"/></svg></button>
      <button aria-label="上移"><svg><use href="#aU"/></svg></button>
      <button aria-label="下移" class="gry"><svg><use href="#aD"/></svg></button>
      <button aria-label="显示"><svg><use href="#show"/></svg></button>
      <button aria-label="折叠"><svg><use href="#colp"/></svg></button><button class="ar" aria-label="折叠选项"><svg class="dd"><use href="#dd"/></svg></button>
      <button aria-label="展开"><svg><use href="#expd"/></svg></button><button class="ar" aria-label="展开选项"><svg class="dd"><use href="#dd"/></svg></button>
      <button aria-label="节点文本"><svg><use href="#cols"/></svg></button><button class="ar" aria-label="节点文本选项"><svg class="dd"><use href="#dd"/></svg></button>
    </div>
    <div class="treebox">
      <ul class="tree">
        <li class="l1"><svg class="tw"><use href="#tc"/></svg><svg><use href="#ftg"/></svg>疲劳 <em>(ftg)</em></li>
        <li class="l1"><svg class="tw"><use href="#tc"/></svg><svg><use href="#mph"/></svg>多物理场</li>
        <li class="l1"><svg class="tw"><use href="#to"/></svg><svg><use href="#mesh"/></svg>网格 1</li>
        <li class="l2"><svg class="tw"></svg><svg><use href="#size"/></svg>大小</li>
        <li class="l2 off"><svg class="tw"><use href="#tc"/></svg><svg><use href="#map"/></svg>轴瓦内表面</li>
        <li class="l2"><svg class="tw"><use href="#tc"/></svg><svg><use href="#map"/></svg>映射 9</li>
        <li class="l2"><svg class="tw"><use href="#tc"/></svg><svg><use href="#edge"/></svg>轴瓦10*80*2</li>
        <li class="l2"><svg class="tw"><use href="#tc"/></svg><svg><use href="#map"/></svg>小端销孔</li>
        <li class="l2 off"><svg class="tw"><use href="#tc"/></svg><svg><use href="#map"/></svg>轴瓦外表面</li>
        <li class="l2"><svg class="tw"><use href="#tc"/></svg><svg><use href="#map"/></svg>大端销孔</li>
        <li class="l2"><svg class="tw"><use href="#tc"/></svg><svg><use href="#tetW"/></svg>连杆</li>
        <li class="l2 off"><svg class="tw"><use href="#tc"/></svg><svg><use href="#map"/></svg>映射 2</li>
        <li class="l2"><svg class="tw"><use href="#tc"/></svg><svg><use href="#quadW"/></svg>自由四边形网格 1</li>
        <li class="l2"><svg class="tw"><use href="#tc"/></svg><svg><use href="#edge"/></svg>曲轴大端销10*80</li>
        <li class="l2 off"><svg class="tw"><use href="#to"/></svg><svg><use href="#tet"/></svg>轴瓦剩余边缘</li>
        <li class="l3 off"><svg class="tw"></svg><svg><use href="#size"/></svg>大小 1</li>
        <li class="l3 dim"><svg class="tw"><use href="#to"/></svg><svg><use href="#err"/></svg>错误 1</li>
        <li class="l4 dim"><svg class="tw"></svg><svg><use href="#err"/></svg>错误</li>
        <li class="l3 dim"><svg class="tw"></svg><svg><use href="#warn"/></svg>警告 1</li>
        <li class="l3 dim"><svg class="tw"></svg><svg><use href="#warn"/></svg>警告 2</li>
        <li class="l3 dim"><svg class="tw"><use href="#to"/></svg><svg><use href="#warn"/></svg>警告 3</li>
        <li class="l4 dim"><svg class="tw"></svg><svg><use href="#warn"/></svg>警告 1</li>
        <li class="l3 dim"><svg class="tw"><use href="#to"/></svg><svg><use href="#warn"/></svg>警告 4</li>
        <li class="l4 dim"><svg class="tw"></svg><svg><use href="#warn"/></svg>警告 1</li>
        <li class="l2 off"><svg class="tw"><use href="#tc"/></svg><svg><use href="#tet"/></svg>螺栓</li>
        <li class="l2 off"><svg class="tw"><use href="#tc"/></svg><svg><use href="#tet"/></svg>螺母</li>
        <li class="l2 off"><svg class="tw"><use href="#tc"/></svg><svg><use href="#map"/></svg>映射 3</li>
        <li class="l2 off"><svg class="tw"><use href="#tc"/></svg><svg><use href="#map"/></svg>映射 6</li>
        <li class="l2"><svg class="tw"><use href="#tc"/></svg><svg><use href="#triB"/></svg>曲轴圆柱边</li>
        <li class="l2"><svg class="tw"><use href="#tc"/></svg><svg><use href="#tet"/></svg>曲轴剩余</li>
        <li class="l2"><svg class="tw"><use href="#tc"/></svg><svg><use href="#map"/></svg>映射 5</li>
        <li class="l2"><svg class="tw"><use href="#tc"/></svg><svg><use href="#tet"/></svg>小端销</li>
        <li class="l2"><svg class="tw"></svg><svg><use href="#tetG"/></svg>自由四面体网格 7</li>
        <li class="l0"><svg class="tw"><use href="#to"/></svg><svg><use href="#gl"/></svg>研究 1</li>
        <li class="l1"><svg class="tw"></svg><svg><use href="#st1"/></svg>步骤 1: 稳态</li>
        <li class="l1"><svg class="tw"></svg><svg><use href="#st2"/></svg>步骤 2: 瞬态</li>
        <li class="l1"><svg class="tw"><use href="#to"/></svg><svg><use href="#solc"/></svg>求解器配置</li>
        <li class="l2"><svg class="tw"><use href="#to"/></svg><svg><use href="#sol"/></svg>解 1 <em>(sol1)</em></li>
        <li class="l3"><svg class="tw"></svg><svg><use href="#ceq"/></svg>编译方程: 瞬态</li>
        <li class="l3"><svg class="tw"><use href="#tc"/></svg><svg><use href="#uvw"/></svg>因变量 1</li>
        <li class="l3"><svg class="tw"><use href="#to"/></svg><svg><use href="#tsol"/></svg>瞬态求解器 1</li>
        <li class="l4"><svg class="tw"></svg><svg><use href="#dir"/></svg>直接</li>
        <li class="l4"><svg class="tw"></svg><svg><use href="#adv"/></svg>高级</li>
        <li class="l4"><svg class="tw"></svg><svg><use href="#fc"/></svg>全耦合 1</li>
        <li class="l4"><svg class="tw"></svg><svg class="cw"><use href="#warn"/></svg>警告 1</li>
        <li class="l4 cur"><svg class="tw"></svg><svg class="ce"><use href="#err"/></svg>错误 1</li>
        <li class="l0"><svg class="tw"><use href="#tc"/></svg><svg><use href="#gl"/></svg>研究 2</li>
        <li class="l0"><svg class="tw"><use href="#tc"/></svg><svg><use href="#res"/></svg>结果</li>
      </ul>
      <div class="vbar"><svg><use href="#chU"/></svg><i class="gap"></i><i class="thumb"></i><svg><use href="#chD"/></svg></div>
      <div class="hbar"><svg><use href="#chL"/></svg><i class="thumb"></i><i class="gap"></i><svg><use href="#chR"/></svg></div>
      <div class="corner"></div>
    </div>
  </section>

  <section class="panel settings">
    <header class="ph"><h2>设置</h2><svg class="dd"><use href="#dd"/></svg><svg class="pin"><use href="#pin"/></svg></header>
    <h3>错误</h3>
    <div class="acts">
      <button><svg><use href="#ctos"/></svg>计算到选定项</button>
      <button><svg><use href="#eq"/></svg>计算</button>
    </div>
    <h4><svg class="dd"><use href="#dd"/></svg>错误</h4>
    <p class="log">找不到一致的初始值。<br>
至少有一个点的拉伸耦合变量插值失败：找不到源点。<br>
Geometry: geom1, Boundaries: 73-74, 83, 86, Destination coordinates: [-1.9805089400472708;<br>
-1004181809.3277824; 10783937169.281475], [-1.9805089400472708; -1004181809.3277824;<br>
10783937169.281475]<br>
无法计算表达式。<br>
Expression: comp1.dst2src p40(isdefined(comp1.mbd.incontact))<br>
无法计算算子。<br>
Operator: if, Geometry: geom1, Boundaries: 73-74, 83, 86<br>
无法计算表达式。<br>
Expression: if(comp1.incontact p40,comp1.dst2src p40(isdefined(comp1.mbd.incontact)),0)<br>
无法计算变量。<br>
Variable: comp1.mbd.cont1.incontact, Defined as: if(comp1.incontact p40,comp1.dst2src p40(isdefined<br>
(comp1.mbd.incontact)),0)||if(comp1.incontact p40,comp1.src2dst p40(isdefined<br>
(comp1.mbd.incontact)),0)<br>
无法计算算子的雅可比矩阵。<br>
Operator: if, Geometry: geom1, Boundaries: 73-74, 83, 86<br>
无法计算表达式的雅可比矩阵。<br>
Expression: if(comp1.incontact p40&amp;&amp;comp1.mbd.cont1.incontact,if(comp1.incontact p40&amp;&amp;comp1.u<br>
fld act&amp;&amp;if(comp1.incontact p40,comp1.src2dst p40(comp1.u fld act),0),comp1.src2dst p40(comp1.u)-<br>
comp1.u,0),0)<br>
最后一个时步不收敛。</p>
    <div class="mark"></div>
  </section>

  <div class="right">
    <section class="panel graphics">
      <header class="ph"><h2>图形</h2><svg class="dd"><use href="#dd"/></svg><svg class="pin"><use href="#pin"/></svg></header>
      <div class="tools">
        <button aria-label="放大"><svg><use href="#zin"/></svg></button>
        <button aria-label="缩小"><svg><use href="#zout"/></svg></button>
        <button aria-label="框选缩放"><svg><use href="#zbox"/></svg></button><button class="ar" aria-label="缩放选项"><svg class="dd"><use href="#dd"/></svg></button>
        <button aria-label="居中"><svg><use href="#cen"/></svg></button>
        <button aria-label="缩放到范围"><svg><use href="#ext"/></svg></button>
        <i class="sep"></i>
        <button aria-label="默认视图"><svg><use href="#axs"/></svg></button><button class="ar" aria-label="视图选项"><svg class="dd"><use href="#dd"/></svg></button>
        <button aria-label="xy 视图"><svg><use href="#vxy"/></svg></button>
        <button aria-label="yz 视图"><svg><use href="#vyz"/></svg></button>
        <button aria-label="xz 视图"><svg><use href="#vxz"/></svg></button>
        <button aria-label="投影"><svg><use href="#persp"/></svg></button>
        <i class="sep"></i>
        <button aria-label="旋转"><svg><use href="#rot"/></svg></button><button class="ar" aria-label="旋转选项"><svg class="dd"><use href="#dd"/></svg></button>
        <i class="sep"></i>
        <button aria-label="裁剪"><svg><use href="#clip"/></svg></button><button class="ar" aria-label="裁剪选项"><svg class="dd"><use href="#dd"/></svg></button>
        <i class="sep"></i>
        <button aria-label="选择对象"><svg><use href="#selb"/></svg></button><button class="ar" aria-label="对象选项"><svg class="dd"><use href="#dd"/></svg></button>
        <button aria-label="选择域"><svg><use href="#selc"/></svg></button><button class="ar" aria-label="域选项"><svg class="dd"><use href="#dd"/></svg></button>
        <button aria-label="选择框"><svg><use href="#sel"/></svg></button>
        <button aria-label="取消选择框"><svg><use href="#desel"/></svg></button>
        <i class="sep"></i>
        <button aria-label="隐藏"><svg><use href="#hide"/></svg></button>
        <button aria-label="重置隐藏"><svg><use href="#unh"/></svg></button>
        <button aria-label="仅查看隐藏"><svg><use href="#hwin"/></svg></button><button class="ar" aria-label="隐藏选项"><svg class="dd"><use href="#dd"/></svg></button>
        <i class="sep"></i>
        <button aria-label="剖面"><svg><use href="#grid3"/></svg></button><button class="ar" aria-label="剖面选项"><svg class="dd"><use href="#dd"/></svg></button>
        <i class="sep"></i>
        <span class="duo"><button aria-label="场景光"><svg><use href="#lite"/></svg></button><button class="ar" aria-label="场景光选项"><svg class="dd"><use href="#dd"/></svg></button></span>
        <button aria-label="透明"><svg><use href="#transp"/></svg></button><button class="ar" aria-label="透明选项"><svg class="dd"><use href="#dd"/></svg></button>
        <button aria-label="线框"><svg><use href="#wire"/></svg></button>
        <button aria-label="坐标轴方向" class="act"><svg><use href="#orient"/></svg></button>
        <button aria-label="栅格"><svg><use href="#grid"/></svg></button>
        <i class="sep"></i>
        <button aria-label="材料标签"><svg><use href="#nolab"/></svg></button>
        <button aria-label="颜色"><svg><use href="#pal"/></svg></button><button class="ar" aria-label="颜色选项"><svg class="dd"><use href="#dd"/></svg></button>
        <i class="sep"></i>
        <button aria-label="环境"><svg><use href="#snapi"/></svg></button><button class="ar" aria-label="环境选项"><svg class="dd"><use href="#dd"/></svg></button>
        <button aria-label="图像快照"><svg><use href="#cam"/></svg></button>
        <button aria-label="打印"><svg><use href="#print"/></svg></button>
      </div>
      <div class="canvas">
        <svg class="badge"><use href="#logo"/></svg>
        <svg class="model" viewBox="0 0 900 1500">
          <path d="M479 124 L685 94 C715 96 730 130 729 168 C728 200 718 219 701 219 L493 253Z" fill="url(#cyl)"/>
          <path d="M500 131 L697 101M679 94C712 92 730 130 729 168C728 200 718 219 701 219" fill="none" stroke="#000" stroke-width="3"/>
          <ellipse cx="485" cy="189" rx="36" ry="65" transform="rotate(-4 485 189)" fill="#c6c6c6" stroke="#000" stroke-width="3"/>
          <path d="M640 786H680C730 790 775 880 773 960C772 1020 755 1055 726 1059L660 1072Z" fill="url(#jour)"/>
          <path d="M680 786C730 790 775 880 773 960C772 1020 755 1055 726 1059" fill="none" stroke="#000" stroke-width="3"/>
          <path d="M655 1080L684 1070C684 1095 670 1120 650 1132Z" fill="#a5a5a5"/>
          <path d="M449 700C460 672 480 660 500 657L550 647C585 655 600 690 618 707L680 786C698 830 706 900 703 980C700 1040 672 1080 650 1127L700 1188C716 1208 728 1228 724 1252L712 1306L640 1345C590 1362 530 1352 490 1322C455 1298 432 1280 425 1255L395 1170Z" fill="#c6c6c6"/>
          <path d="M500 657L550 647C585 655 600 690 618 707L680 786C698 830 706 900 703 980C700 1040 672 1080 648 1120L620 1090C600 1050 640 1020 634 940C630 880 612 820 600 790C585 720 550 665 500 657Z" fill="url(#side)"/>
          <path d="M616 860C634 900 638 960 628 1000C618 1035 606 1050 620 1090L640 1128" fill="none" stroke="#fff" stroke-width="8"/>
          <path d="M614 765C618 820 620 850 632 880L640 930L652 860Z" fill="#adadad"/>
          <path d="M538 1035L640 1130L700 1188L650 1262L505 1075Z" fill="#999"/>
          <path d="M522 985L538 1035L625 1120L650 1132L620 1080Z" fill="#b0b0b0"/>
          <path d="M522 988L508 1074L536 1040Z" fill="#c9c9c9" stroke="#fff" stroke-width="4"/>
          <path d="M648 1127L700 1188C716 1208 728 1228 724 1252L712 1306L640 1335L655 1262C665 1240 680 1230 690 1200L640 1130Z" fill="#b0b0b0"/>
          <path d="M655 1262L640 1325" stroke="#fff" stroke-width="12"/>
          <path d="M708 1190C728 1228 722 1262 712 1306" fill="none" stroke="#888" stroke-width="6"/>
          <ellipse cx="525" cy="809" rx="74" ry="153" transform="rotate(-8 525 809)" fill="#d2d2d2" stroke="#000" stroke-width="3"/>
          <ellipse cx="516" cy="812" rx="62" ry="128" transform="rotate(-8 516 812)" fill="#b5b5b5" stroke="#eee" stroke-width="5"/>
          <path d="M430 706L490 690C540 700 580 790 576 858C574 900 560 928 540 933L485 943Z" fill="url(#jour)"/>
          <path d="M490 690C540 700 580 790 576 858C574 900 560 928 540 933M452 727L522 711" fill="none" stroke="#000" stroke-width="4"/>
          <path d="M328 695L385 684C430 686 462 735 478 800C494 860 494 960 488 1020C482 1100 440 1130 403 1185L400 1202L440 1320L466 1380C470 1395 462 1403 450 1406L385 1429C330 1432 280 1395 245 1355C210 1312 180 1270 168 1225L192 890C195 820 215 770 250 738C275 715 300 702 328 695Z" fill="#c6c6c6"/>
          <path d="M328 695L385 684C430 686 462 735 478 800C494 860 494 960 488 1020C482 1100 440 1130 403 1185L370 1170C380 1100 420 1060 410 900C430 850 424 790 415 750C405 710 370 695 328 695Z" fill="url(#side)"/>
          <path d="M252 740C290 708 350 690 385 706C415 722 422 780 419 830C416 870 410 890 404 898C350 840 300 790 252 740Z" fill="#979797"/>
          <path d="M252 740C290 706 350 690 385 704C415 720 424 780 420 830" fill="none" stroke="#777" stroke-width="5"/>
          <path d="M404 900C412 1000 408 1060 385 1120L368 1170" fill="none" stroke="#fff" stroke-width="8"/>
          <path d="M455 797C485 830 492 870 480 890" fill="none" stroke="#8b8b8b" stroke-width="3"/>
          <path d="M370 685L385 684C430 686 462 735 478 800C490 845 494 900 492 940" fill="none" stroke="#111" stroke-width="3"/>
          <path d="M325 1212L370 1200L400 1206L440 1320L430 1375L388 1385Z" fill="url(#slope)"/>
          <path d="M400 1202L440 1320L466 1380C470 1395 462 1403 450 1406L432 1405C444 1360 438 1330 425 1300L385 1215Z" fill="#9c9c9c"/>
          <path d="M388 1382L428 1372C432 1390 425 1408 410 1412L385 1415Z" fill="#f4f4f4"/>
          <path d="M370 1172C385 1195 390 1210 388 1222M320 1212L372 1196" fill="none" stroke="#fff" stroke-width="6"/>
          <ellipse cx="283" cy="1038" rx="76" ry="174" transform="rotate(-9 283 1038)" fill="#d0d0d0" stroke="#000" stroke-width="3"/>
          <ellipse cx="272" cy="1040" rx="68" ry="156" transform="rotate(-9 272 1040)" fill="#aaa" stroke="#f4f4f4" stroke-width="7"/>
          <path d="M118 921L258 892C310 905 345 1010 342 1100C340 1160 325 1182 300 1192L176 1226Z" fill="url(#jour)"/>
          <ellipse cx="150" cy="1073" rx="70" ry="153" transform="rotate(-8 150 1073)" fill="#c6c6c6" stroke="#000" stroke-width="3"/>
        </svg>
        <svg class="triad" viewBox="0 0 64 60">
          <path d="M33 40 37 20" stroke="#dc1e5c" stroke-width="1.5"/><path d="m38 12 3 11-7-1z" fill="#dc1e5c"/>
          <path d="M33 40 18 41" stroke="#4aa53c" stroke-width="1.5"/><path d="m10 41 9-3v6z" fill="#4aa53c"/>
          <path d="m33 40 10 7" stroke="#4080bf" stroke-width="1.5"/><path d="m50 51-8-1 4-6z" fill="#4080bf"/>
          <text x="37" y="8">x</text><text x="0" y="45">y</text><text x="52" y="58">z</text>
        </svg>
      </div>
    </section>

    <section class="panel messages">
      <div class="mtabs">
        <button class="on">消息<i>✕</i></button>
        <button>进度</button>
        <button>日志</button>
        <button>探针表 1<i>✕</i></button>
        <svg class="dd"><use href="#dd"/></svg><svg class="pin"><use href="#pin"/></svg>
      </div>
      <div class="tools">
        <button aria-label="清除"><svg><use href="#broom"/></svg></button>
        <button aria-label="滚动" class="act"><svg><use href="#msgw"/></svg></button>
      </div>
      <div class="msgbox">
        <p>COMSOL Multiphysics 6.1.0.252<br>
[2023年7月2日 下午4:44] 打开的文件：E:\Phd_Work\柴油机关键运动部件数字孪生研究\20230619连杆磨损模型结果提取\test\rod-crank-7(no_tie_轴颈轴瓦相同宽度_实际速度_实际质量_气体作用力_两个循环<br>
[2023年7月2日 下午4:44] 某些几何实体已隐藏。<br>
[2023年7月2日 下午4:45] 求解的自由度数：47553。</p>
        <div class="hbar"><svg><use href="#chL"/></svg><i class="thumb"></i><i class="gap"></i><svg><use href="#chR"/></svg></div>
      </div>
    </section>
  </div>
</main>
<footer class="status">1.03 GB | 2.72 GB</footer>
</body>
</html>
```
FILE: styles.css
```css
* { box-sizing: border-box; }
body {
  margin: 0;
  height: 100vh;
  display: flex;
  flex-direction: column;
  overflow: hidden;
  background: #fafbff;
  color: #000;
  font: 12px/17px "Noto Sans", "Noto Sans CJK SC", sans-serif;
}
button {
  font: inherit;
  color: inherit;
  background: none;
  border: 0;
  padding: 0;
  margin: 0;
  white-space: nowrap;
}
h1, h2, h3, h4, p, ul { margin: 0; padding: 0; font-weight: 400; }
ul { list-style: none; }
svg { display: block; flex: none; }
.paints { position: absolute; width: 0; height: 0; }
.sprite { display: none; }
.dd { width: 7px; height: 4px; }
.pin { width: 8px; height: 12px; }
.tiny { font: 7px "Noto Sans", sans-serif; fill: #209cb9; }
.ax { font: 9px "Noto Sans", sans-serif; fill: #777; }

/* title bar */
.titlebar {
  display: flex;
  align-items: center;
  height: 23px;
  flex: none;
  background: #9e5a68;
}
.logo { width: 16px; height: 16px; margin-bottom: 6px; }
.qat {
  display: flex;
  align-items: center;
  height: 16px;
  margin-left: 14px;
  padding-left: 3px;
  width: 358px;
  border-left: 1px solid #c79aa4;
  border-right: 1px solid #c79aa4;
}
.qat button { width: 24px; display: flex; justify-content: center; filter: drop-shadow(0 0 3px rgba(255, 255, 255, .8)); }
.qat svg { width: 15px; height: 15px; }
.qat .more { width: 10px; filter: none; }
.qat .dd { width: 5px; height: 3px; }
.titlebar h1 {
  flex: 1;
  text-align: center;
  font-size: 12px;
  white-space: nowrap;
  padding-left: 96px;
  line-height: 17px;
  padding-top: 2px;
  text-shadow: 0 0 6px #e9c9cf, 0 0 6px #e9c9cf, 0 0 8px #e9c9cf;
}
.winbtns { display: flex; padding-right: 5px; }
.winbtns button { width: 45px; height: 20px; display: flex; align-items: center; justify-content: center; }
.winbtns svg { width: 10px; height: 10px; fill: none; stroke: #fff; }

/* ribbon tabs */
.tabs {
  display: flex;
  flex: none;
  margin: 3px 8px 0;
  height: 24px;
  padding-top: 1px;
  background: #ebeced;
}
.tabs button { padding: 0 9px; height: 23px; }
.tabs .file { width: 55px; padding: 0; height: 22px; background: #338bcc; color: #fff; }
.tabs .on { background: #fafbff; color: #338bcc; }
.tabs .help {
  margin: 2px 3px 0 auto;
  width: 16px;
  height: 16px;
  padding: 0;
  line-height: 16px;
  font-size: 13px;
  background: #338bcc;
  border-radius: 1px;
  color: #fff;
}

/* ribbon */
.ribbon {
  display: flex;
  flex: none;
  height: 91px;
  margin: 0 7px;
  border: 1px solid #d2d3d6;
  border-top: 0;
}
.grp {
  display: flex;
  flex-direction: column;
  padding: 7px 1px 0 0;
  background: linear-gradient(#d2d3d6, #d2d3d6) right 8px / 1px 75px no-repeat;
}
.grp .items { display: flex; justify-content: center; height: 66px; }
.grp h2 { font-size: 12px; color: #666; text-align: center; }
.g1 { width: 123px; } .g2 { width: 112px; } .g3 { width: 132px; } .g4 { width: 146px; } .g5 { width: 67px; }
.g6 { width: 145px; } .g7 { width: 110px; } .g8 { width: 155px; } .g9 { width: 232px; } .g10 { width: 111px; }
.g2 .items, .g9 .items { padding-left: 4px; }
.g8 .items { gap: 3px; padding-left: 4px; }
.g4 .items { padding-right: 4px; }
.rb {
  display: flex;
  flex-direction: column;
  align-items: center;
  gap: 5px;
  min-width: 40px;
  padding: 0 3px;
  line-height: 13px;
}
.rb > svg { width: 28px; height: 28px; }
.rb span .dd, .sb .dd { display: inline-block; width: 5px; height: 3px; vertical-align: 3px; }
.geo { color: #df6345; }
.msh { color: #858585; }
.rb span { color: #000; }
.pi { height: 28px; font: 23px/28px "Noto Sans", sans-serif; color: #338bcc; }
sub { font-size: 70%; line-height: 0; }
.col { display: flex; flex-direction: column; padding-left: 5px; }
.g4 .col { padding-left: 0; }
.sb { display: flex; align-items: center; gap: 2px; height: 22px; line-height: 16px; padding-bottom: 8px; }
.sb > svg:first-child { width: 16px; height: 14px; }
.sb b { width: 15px; font: 14px/16px "Noto Sans", sans-serif; color: #338bcc; white-space: nowrap; }
.sb .fx { font-size: 11px; width: 16px; }
.sb .dd { margin-left: 2px; }
.sb:disabled { color: #b0b0b0; }
.sb:disabled b { color: #a9cdea; }

/* work area */
main {
  flex: 1;
  min-height: 0;
  display: grid;
  grid-template-columns: 488fr 621fr 1110fr;
  grid-template-rows: minmax(0, 1fr);
  gap: 5px;
  padding: 4px 7px 0;
}
.panel { position: relative; border: 1px solid #d2d3d6; min-width: 0; min-height: 0; display: flex; flex-direction: column; }
.ph { display: flex; align-items: center; gap: 6px; height: 34px; padding: 1px 3px 0 7px; color: #555; flex: none; }
.ph h2 { flex: 1; padding-bottom: 3px; font: 300 21px/28px "Noto Sans CJK SC", sans-serif; color: #2d5797; }
.ph .dd, .mtabs .dd { width: 9px; height: 5px; }
.tools { display: flex; align-items: center; height: 20px; flex: none; padding-left: 3px; color: #338bcc; }
.tools button { width: 23px; height: 20px; display: flex; align-items: center; justify-content: center; }
.tools button svg { width: 16px; height: 16px; }
.tools .ar { width: 18px; justify-content: flex-start; padding-left: 3px; color: #000; }
.tools .ar .dd { width: 7px; height: 4px; }
.tools .gry { color: #999; }
.sep { width: 1px; height: 16px; margin: 0 3px 0 4px; background: #d2d3d6; }

/* model tree */
.builder .tools { margin-top: -2px; }
.treebox {
  flex: 1;
  min-height: 0;
  margin: 3px 5px 9px 4px;
  border: 1px solid #d2d3d6;
  background: #fff;
  display: grid;
  grid-template-columns: minmax(0, 1fr) 17px;
  grid-template-rows: minmax(0, 1fr) 17px;
}
.tree { overflow: hidden; }
.tree li { display: flex; align-items: center; height: 20px; white-space: pre; color: #000; }
.tree svg { width: 16px; height: 16px; margin-right: 6px; }
.tree .tw { width: 10px; height: 12px; margin-right: 6px; }
.tree em { margin-left: 4px; }
.l0 { padding-left: 24px; }
.l1 { padding-left: 44px; }
.l2 { padding-left: 64px; }
.l3 { padding-left: 84px; }
.l4 { padding-left: 104px; }
.tree .off, .tree .dim { color: #666; }
.off svg:not(.tw) { opacity: .7; }
.dim svg:not(.tw) { color: #999; }
.cw { color: #e55b2f; }
.ce { color: #d81b60; }
.tree .cur { background: #dadadc; }
.vbar { display: flex; flex-direction: column; background: #fdfdfe; }
.vbar svg, .hbar svg { width: 17px; height: 17px; background: #f6f6f7; }
.thumb { background: #e6e6e7; }
.vbar .gap { flex: 468; }
.vbar .thumb { flex: 477; }
.hbar { display: flex; height: 17px; background: #fdfdfe; }
.hbar .thumb { flex: 174; }
.hbar .gap { flex: 251; }
.corner { background: #f0f0f0; }

/* settings */
.settings h3 { font-size: 14px; line-height: 20px; padding-left: 7px; color: #2d5797; }
.acts { display: flex; gap: 10px; padding: 1px 0 0 7px; }
.acts button { display: flex; align-items: center; gap: 3px; height: 17px; }
.acts svg { width: 16px; height: 15px; }
.settings h4 {
  display: flex;
  align-items: center;
  gap: 13px;
  height: 26px;
  margin-top: 6px;
  padding: 0 0 1px 5px;
  font-size: 13px;
  background: #dfe8f4;
}
.settings h4 .dd { width: 8px; height: 5px; color: #444; }
.log { padding: 9px 0 0 7px; white-space: nowrap; }
.mark {
  position: absolute;
  z-index: 2;
  left: -20px;
  right: -23px;
  top: 69px;
  height: 441px;
  border: 2px solid #ed1c24;
}

/* graphics and messages */
.right { display: grid; grid-template-rows: minmax(0, 786fr) minmax(0, 272fr); gap: 5px; min-width: 0; min-height: 0; }
.graphics { border-color: #9bcdf6; background: linear-gradient(#fafbff 60px, #e4f1ff 95%); }
.graphics .ph, .graphics .ph h2 { color: #2189e2; }
.graphics .tools { margin-top: -2px; }
.tools .act, .duo { background: #9fd2fb; border: 1px solid #1f8fee; border-radius: 2px; }
.tools .act { width: 20px; margin: 0 2px 0 1px; }
.duo { display: flex; height: 20px; width: 38px; margin-right: 2px; }
.tools .duo button { width: 19px; height: 18px; }
.tools .duo .ar { width: 17px; border-left: 1px solid #1f8fee; padding-left: 4px; }
.canvas { position: relative; flex: 1; }
.badge { position: absolute; right: 4px; top: 8px; width: 20px; height: 20px; }
.model { position: absolute; left: 193px; top: 42px; width: 300px; height: 500px; }
.triad { position: absolute; left: 11px; bottom: 24px; width: 64px; height: 60px; overflow: visible; }
.triad text { font: 13px "Noto Sans", sans-serif; fill: #111; }

.mtabs { display: flex; align-items: flex-end; height: 31px; padding: 0 3px 0 4px; gap: 8px; border-bottom: 1px solid #d2d3d6; color: #555; flex: none; }
.mtabs button { height: 25px; padding: 0 5px; background: #ebebeb; color: #000; }
.mtabs .on { background: #fafbff; border: 1px solid #d2d3d6; border-bottom: 0; height: 26px; padding: 0 5px 0 4px; color: #2d5797; margin-bottom: -1px; }
.mtabs i { font-style: normal; font-size: 14px; margin: 0 1px 0 8px; color: #c3cad3; }
.mtabs .dd { margin: 0 -2px 7px auto; }
.mtabs .pin { margin-bottom: 3px; }
.messages .tools { margin: 7px 0 3px; padding-left: 4px; }
.msgbox { flex: 1; min-height: 0; margin: 0 4px 5px; border: 1px solid #d2d3d6; display: flex; flex-direction: column; }
.msgbox p { flex: 1; min-height: 0; padding-left: 2px; white-space: nowrap; overflow: hidden; }
.msgbox .hbar .thumb { flex: 699; }
.msgbox .hbar .gap { flex: 364; }
.status { flex: none; height: 37px; padding: 12px 0 0; margin-left: 69.55%; white-space: nowrap; }
```
